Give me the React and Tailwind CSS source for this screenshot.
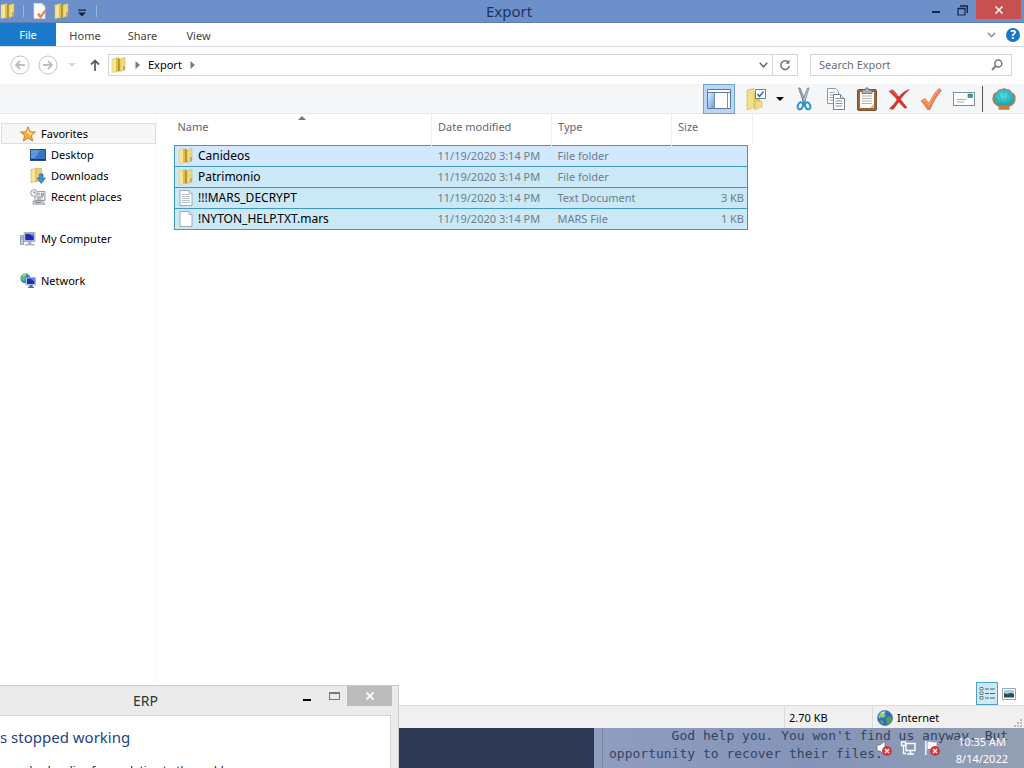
import { useState } from 'react';

const files = [
  { name: 'Canideos', date: '11/19/2020 3:14 PM', type: 'File folder', size: '', icon: 'folder' },
  { name: 'Patrimonio', date: '11/19/2020 3:14 PM', type: 'File folder', size: '', icon: 'folder' },
  { name: '!!!MARS_DECRYPT', date: '11/19/2020 3:14 PM', type: 'Text Document', size: '3 KB', icon: 'text' },
  { name: '!NYTON_HELP.TXT.mars', date: '11/19/2020 3:14 PM', type: 'MARS File', size: '1 KB', icon: 'blank' },
];

function FolderIcon({ className = 'w-4 h-4' }) {
  return (
    <svg viewBox="0 0 16 16" className={className} aria-hidden="true">
      <path d="M1 2l6-1.500v14l-6 1z" fill="#f6e694" stroke="#d8c060" strokeWidth=".5" />
      <path d="M5 1.200l2-.7v14l-2 .4z" fill="#dcc052" />
      <path d="M7 .5L9 2v12l-2 .5z" fill="#b3942f" />
      <path d="M9 2l5-1.500V12l-5 3z" fill="#efda7a" stroke="#cdae48" strokeWidth=".5" />
      <path d="M12 9h2v4l-2 1z" fill="#b7ab78" />
    </svg>
  );
}

function FileIcon({ lined }) {
  return (
    <svg viewBox="0 0 16 16" className="w-4 h-4" aria-hidden="true">
      <path d="M2 .5h9l3 3v12H2z" fill="#fff" stroke="#98a0a8" strokeWidth=".9" />
      <path d="M11 .5v3h3" fill="#e8ecef" stroke="#98a0a8" strokeWidth=".8" />
      {lined && <path d="M4 4.500h7M4 6.500h8M4 8.500h8M4 10.500h8M4 12.500h8" stroke="#a5aeb8" strokeWidth=".8" />}
    </svg>
  );
}

function FileCheckIcon() {
  return (
    <svg viewBox="0 0 16 16" className="w-4 h-4" aria-hidden="true">
      <path d="M2 .5h8l3 3v12H2z" fill="#fff" stroke="#d8dce6" strokeWidth=".7" />
      <path d="M10 .5v3h3" fill="#dde" />
      <path d="M6 10.500l2.500 3.500L13.500 7.500" fill="none" stroke="#e8845a" strokeWidth="2.400" />
    </svg>
  );
}

function StarIcon() {
  return (
    <svg viewBox="0 0 16 16" className="w-4 h-4" aria-hidden="true">
      <path d="M8 .7l2.100 5 5.400.4-4.100 3.500 1.300 5.400L8 12.100 3.300 15l1.300-5.400L.5 6.100l5.400-.4z" fill="#fba93a" stroke="#c97a3c" strokeWidth=".9" />
      <path d="M8 2.800l1.300 3.800 3.700.3-3 2.300-2-2.200-3.500-.6 2.100-.2z" fill="#ffe29a" />
    </svg>
  );
}

function DesktopIcon() {
  return (
    <svg viewBox="0 0 16 16" className="w-4 h-4" aria-hidden="true">
      <rect x=".5" y="2.500" width="15" height="11" fill="#3b74c6" stroke="#2a4d86" />
      <path d="M1 3h9L5 11H1z" fill="#5e98de" />
      <path d="M1 12h14v1H1z" fill="#1d3b6c" />
    </svg>
  );
}

function DownloadsIcon() {
  return (
    <svg viewBox="0 0 16 16" className="w-4 h-4" aria-hidden="true">
      <path d="M1 1.500L6 .5v13l-5 1z" fill="#f5e49a" stroke="#c9ab48" strokeWidth=".6" />
      <path d="M6 .5h5.500v12L6 14z" fill="#e8cf6a" stroke="#c9ab48" strokeWidth=".6" />
      <path d="M9.500 6h3.500v4h2.500L11.300 15.500 7 10h2.500z" fill="#3f8fd6" stroke="#2567a8" strokeWidth=".7" />
    </svg>
  );
}

function RecentIcon() {
  return (
    <svg viewBox="0 0 16 16" className="w-4 h-4" aria-hidden="true">
      <path d="M5 2.500h10v9H5z" fill="#e7eaec" stroke="#8e979e" strokeWidth=".9" />
      <path d="M3 12h9.500l2.500 3.200H3z" fill="#cfd5d9" stroke="#8e979e" strokeWidth=".8" />
      <path d="M7 5h3M11.500 4.500h2v2h-2zM7 8h6M7 10h4M5 13.500h6" fill="none" stroke="#7d878f" strokeWidth=".9" />
      <circle cx="4" cy="4" r="3.400" fill="#f4f6f7" stroke="#8e979e" strokeWidth=".9" />
      <path d="M4 2v2h2" fill="none" stroke="#6b757d" strokeWidth=".8" />
    </svg>
  );
}

function ComputerIcon() {
  return (
    <svg viewBox="0 0 16 16" className="w-4 h-4" aria-hidden="true">
      <path d="M.5 4.500h3v9h-3z" fill="#c3c9d0" stroke="#7c8791" strokeWidth=".7" />
      <path d="M1.200 6.500h1.600M1.200 8h1.600" stroke="#6d7780" strokeWidth=".6" />
      <path d="M4 1.500h11v9H4z" fill="#d7dce4" stroke="#8d97a5" strokeWidth=".7" />
      <path d="M5.200 2.700h8.600v6.600H5.200z" fill="#1f29b4" />
      <path d="M8.500 2.700h5.300v3z" fill="#6d7ff0" />
      <path d="M8 10.500h3.500V13H8zM5.500 12.700h8.500l1 1.800H4.500z" fill="#aab2bc" />
    </svg>
  );
}

function NetworkIcon() {
  return (
    <svg viewBox="0 0 16 16" className="w-4 h-4" aria-hidden="true">
      <circle cx="5.500" cy="5.500" r="5" fill="#2f86cf" />
      <path d="M2 2.500c2-2 4-1.500 5-1.500L5 4l1 2-3 2-2-2z" fill="#5fbf6a" />
      <path d="M2.500 2.800C4 1.500 5 1.500 6 1.600L4 3.500z" fill="#c4f0ce" />
      <path d="M6 4.500h9.500V12H6z" fill="#cfd8e4" stroke="#8492a5" strokeWidth=".6" />
      <path d="M7 5.500h7.500V11H7z" fill="#1c2cb8" />
      <path d="M10.500 5.500h4V9z" fill="#5a78f0" />
      <path d="M9.500 12h3v1.800h1.500V15H8v-1.200h1.500z" fill="#4b6da8" />
    </svg>
  );
}

function GlobeIcon() {
  return (
    <svg viewBox="0 0 16 16" className="w-4 h-4" aria-hidden="true">
      <circle cx="8" cy="8" r="7.500" fill="#2f6cc2" stroke="#5a7290" strokeWidth=".7" />
      <path d="M3 3.500C5 1.500 7 1 9 1.500L7.500 4 9 5.500 6 8 4 7 2 8.500 1.200 7z" fill="#8bcf7a" />
      <path d="M9 7.500l4-1.500 2 3-2 4-3 1.500-.5-3z" fill="#4da552" />
      <path d="M3 10l3 1 .5 3.500-2-1z" fill="#5fb35c" />
      <path d="M4 3.300c1-1 2.500-1.500 4-1.500L5.500 4z" fill="#d8f1f5" />
    </svg>
  );
}

function LayoutIcon() {
  return (
    <svg viewBox="0 0 24 22" className="w-6 h-[22px]" aria-hidden="true">
      <defs>
        <linearGradient id="pane" x2="1" y2="1">
          <stop stopColor="#e4f2ff" />
          <stop offset="1" stopColor="#5ea0e0" />
        </linearGradient>
      </defs>
      <path d="M.5 1.500h23v19H.5z" fill="#fff" stroke="#5b7797" />
      <path d="M1 4.500h22" stroke="#5b7797" />
      <path d="M1 5h6v15H1z" fill="url(#pane)" />
      <path d="M7.500 5v15.500M20.500 5v15.500" stroke="#7492b3" />
    </svg>
  );
}

function SelectFolderIcon() {
  return (
    <svg viewBox="0 0 22 24" className="w-[22px] h-6" aria-hidden="true">
      <path d="M2 3l7-1.500v19L2 23z" fill="#f2df86" stroke="#cfb350" strokeWidth=".6" />
      <path d="M9 6h6v13l-6 4z" fill="#e3c85c" />
      <path d="M10 14h7v6l-7 2.500z" fill="#f0dd88" stroke="#cdb559" strokeWidth=".6" />
      <path d="M10.500 2.500h10v9h-10z" fill="#fff" stroke="#6b8192" />
      <path d="M12.500 7l2 2.500L18.500 4.500" fill="none" stroke="#2d6d94" strokeWidth="1.500" />
    </svg>
  );
}

function ScissorsIcon() {
  return (
    <svg viewBox="0 0 16 24" className="w-4 h-6" aria-hidden="true">
      <path d="M2.500 1l1.500 0 5.500 13-2 1.500z" fill="#a6b4bf" stroke="#5d6c78" strokeWidth=".7" />
      <path d="M13 1l-1.500 0L6.500 14l2 1.500z" fill="#c7d1d8" stroke="#5d6c78" strokeWidth=".7" />
      <ellipse cx="4.300" cy="18.800" rx="2.500" ry="3.600" transform="rotate(24 4.300 18.800)" fill="none" stroke="#258fd0" strokeWidth="1.900" />
      <ellipse cx="11.700" cy="18.800" rx="2.500" ry="3.600" transform="rotate(-24 11.700 18.800)" fill="none" stroke="#258fd0" strokeWidth="1.900" />
      <path d="M8 13l2 3-2 1-2-1z" fill="#3296d2" />
    </svg>
  );
}

function CopyIcon() {
  return (
    <svg viewBox="0 0 20 24" className="w-5 h-6" aria-hidden="true">
      <path d="M1.500 1.500h8l3 3v12h-11z" fill="#fff" stroke="#8b98a3" />
      <path d="M3.500 5.500h5M3.500 8h7M3.500 10.500h7M3.500 13h5" stroke="#9ba8b2" />
      <path d="M7.500 7.500h7l4 4v11h-11z" fill="#fff" stroke="#75838f" />
      <path d="M14.500 7.500v4h4" fill="#dfe5ea" stroke="#75838f" />
      <path d="M9.500 11.500h4M9.500 14h7M9.500 16.500h7M9.500 19h7" stroke="#8296a6" />
    </svg>
  );
}

function ClipboardIcon() {
  return (
    <svg viewBox="0 0 22 24" className="w-[22px] h-6" aria-hidden="true">
      <rect x="1.500" y="2.500" width="19" height="21" rx="1.500" fill="#98653c" stroke="#7d5230" />
      <path d="M4 5h14v16H4z" fill="#fdfdfb" />
      <path d="M6 9h10M6 11.500h10M6 14h10M6 16.500h10" stroke="#b0b0ac" />
      <path d="M14 21l4-4v4z" fill="#c9bfae" />
      <path d="M6 3h3c0-3 4-3 4 0h3v3.500H6z" fill="#a8aeb4" stroke="#666d73" strokeWidth=".8" />
    </svg>
  );
}

function DeleteIcon() {
  return (
    <svg viewBox="0 0 22 22" className="w-[22px] h-[22px]" aria-hidden="true">
      <path d="M1 3.500C3 2 4 1.500 5.500 2.500 7.500 4.500 9 6.500 11 9c2.500-3.500 5.500-6 10.500-7.500C18 4.500 15 7.500 12.500 11.200c2 3 4.500 5.700 6.500 8.300l-2 1c-2.300-2-4.500-4.500-6.200-6.700C9 16.500 7 19 5 21.500l-3.500-1c3-2.500 5.500-5.500 7.500-8.800C6.700 8.500 4 5.500 1 3.500z" fill="#d6352c" stroke="#b52f29" strokeWidth=".5" />
      <path d="M2.500 3.500c1-.8 2-.8 2.700 0L9 8" fill="none" stroke="#ee7d70" strokeWidth=".8" />
    </svg>
  );
}

function ApplyIcon() {
  return (
    <svg viewBox="0 0 22 24" className="w-[22px] h-6" aria-hidden="true">
      <path d="M1 14l4-2.500 4 5C12 10 15 5 19 1.500l2.500 2C16.500 9 13 15 10 22.500H7.500C5.500 19 3.500 16.500 1 14z" fill="#ee8350" stroke="#c9683d" strokeWidth=".7" />
      <path d="M3 14l2-1 4 5.500C12 11 15 7 19 3" fill="none" stroke="#f9b287" />
    </svg>
  );
}

function MailIcon() {
  return (
    <svg viewBox="0 0 24 16" className="w-6 h-4" aria-hidden="true">
      <rect x="1.500" y="1.500" width="21" height="13" fill="#fdfdfd" stroke="#7f92a3" />
      <path d="M16 3h4.500v3.500H16z" fill="#3f9c93" stroke="#317d79" strokeWidth=".6" />
      <path d="M5 8.500h9M5 11h7" stroke="#9ab0c0" />
    </svg>
  );
}

function ShellIcon() {
  return (
    <svg viewBox="0 0 26 24" className="w-[26px] h-6" aria-hidden="true">
      <defs>
        <radialGradient id="shell" cx=".45" cy=".4" r=".65">
          <stop stopColor="#5fe0e4" />
          <stop offset=".6" stopColor="#2cb9c6" />
          <stop offset="1" stopColor="#4f8f86" />
        </radialGradient>
      </defs>
      <path d="M8 20C3 18 0 13 2 9c0-3 3-4 4-4 1-3 4-3 5-3 2-1.500 4 0 5 .3 3-.3 4 1.700 5 3.200 3 1 4 3.500 3.500 5.500.5 4-2 7.500-6.500 9l.5 2.500H8z" fill="#a5814f" />
      <path d="M8.500 19C5 17 2.500 13 3.500 9.500 4 7 5 6 6.500 6c1-2.500 3-3 4.500-3 2-1 3.500-.5 4.500.2 3 0 4 1.500 4.500 3 2.500.8 3.500 3 3.200 5 .3 3.500-2 6.500-5.700 7.800z" fill="url(#shell)" />
      <path d="M12.800 19V4M11 18.500L8 6M9.500 18L4.500 11M14.500 18.500L18 6M16 18l5.500-7" fill="none" stroke="#168995" strokeWidth=".6" opacity=".6" />
      <path d="M8 19c3-1.500 7-1.500 10 0l.5 3.500h-11z" fill="#c07c42" />
    </svg>
  );
}

function NavCircle({ label, flip }) {
  return (
    <button aria-label={label} className="w-5 h-5">
      <svg viewBox="0 0 20 20" className={flip ? 'w-5 h-5 rotate-180' : 'w-5 h-5'}>
        <circle cx="10" cy="10" r="9" fill="#fff" stroke="#c4c4c4" />
        <path d="M15 10H6M10 6l-4 4 4 4" fill="none" stroke="#bdbdbd" strokeWidth="1.800" />
      </svg>
    </button>
  );
}

function Caret({ className }) {
  return (
    <svg viewBox="0 0 8 8" className={className} aria-hidden="true">
      <path d="M0 2h8L4 6z" fill="currentColor" />
    </svg>
  );
}

function RightCaret() {
  return (
    <svg viewBox="0 0 5 8" className="w-[5px] h-2 text-[#7a7a7a]" aria-hidden="true">
      <path d="M.5 0L5 4 .5 8z" fill="currentColor" />
    </svg>
  );
}

function RedCross() {
  return (
    <g>
      <circle cx="11" cy="11" r="5" fill="#d8353b" />
      <path d="M9 9l4 4M13 9l-4 4" stroke="#fff" strokeWidth="1.400" />
    </g>
  );
}

function TitleBar() {
  return (
    <header className="relative flex items-center h-[23px] bg-[#6d8fca] border-b border-[#5d7db8]">
      <div className="flex items-center">
        <FolderIcon />
        <span className="w-px h-3 ml-[7px] bg-[#9fb5dd]"></span>
        <button aria-label="Properties" className="ml-2"><FileCheckIcon /></button>
        <button aria-label="New folder" className="ml-1.5"><FolderIcon /></button>
        <button aria-label="Customize toolbar" className="ml-2 pt-1 text-[#0f1f48]">
          <svg viewBox="0 0 8 8" className="w-2 h-2"><path d="M0 .5h8v1.200H0zM0 3.500h8l-4 4z" fill="currentColor" /></svg>
        </button>
        <span className="w-px h-3 ml-2.5 bg-[#9fb5dd]"></span>
      </div>
      <h1 className="absolute inset-x-0 text-center text-[15px] leading-6 text-[#1b3462] pointer-events-none pr-1.5">Export</h1>
      <div className="ml-auto flex self-start">
        <button aria-label="Minimize" className="w-7 h-5 flex items-center justify-center">
          <span className="w-2 h-0.5 mt-1 bg-[#14254a]"></span>
        </button>
        <button aria-label="Restore" className="w-6 h-5 flex items-center justify-center">
          <svg viewBox="0 0 11 11" className="w-[11px] h-[11px]">
            <path d="M1 3.500h7v6.500H1z" fill="none" stroke="#14254a" strokeWidth="1.200" />
            <path d="M1 3.500h7M3 1h7.300v7" fill="none" stroke="#14254a" strokeWidth="1.400" />
          </svg>
        </button>
        <button aria-label="Close" className="w-[45px] h-[19px] ml-0.5 mr-[3px] flex items-center justify-center bg-[#c75050]">
          <svg viewBox="0 0 8 8" className="w-2 h-2"><path d="M.5.5l7 7M7.500.5l-7 7" stroke="#fff" strokeWidth="1.500" /></svg>
        </button>
      </div>
    </header>
  );
}

function RibbonTabs() {
  return (
    <nav className="flex h-6 bg-white border-b border-[#d9dadb] text-[#444]">
      <button className="w-14 bg-[#1979ca] text-white">File</button>
      <button className="w-[58px] pt-0.5">Home</button>
      <button className="w-[57px] pt-0.5">Share</button>
      <button className="w-[55px] pt-0.5">View</button>
      <div className="ml-auto flex items-center gap-2.5 pr-1">
        <button aria-label="Expand ribbon">
          <svg viewBox="0 0 9 6" className="w-[9px] h-1.5"><path d="M.8.8l3.700 3.700L8.200.8" fill="none" stroke="#999" strokeWidth="1.700" /></svg>
        </button>
        <button aria-label="Help" className="w-3.5 h-3.5 rounded-full bg-[#1c75c8] text-white text-xs leading-3.5 font-bold">?</button>
      </div>
    </nav>
  );
}

function AddressBar() {
  const [search, setSearch] = useState('');

  return (
    <div className="flex items-center h-[37px] pl-2.5 pr-3 pb-0.5 bg-white">
      <NavCircle label="Back" />
      <div className="ml-2 flex"><NavCircle label="Forward" flip /></div>
      <button aria-label="Recent locations" className="ml-2.5 text-[#dadada]"><Caret className="w-2 h-2" /></button>
      <button aria-label="Up" className="ml-3.5">
        <svg viewBox="0 0 10 12" className="w-2.5 h-3"><path d="M5 12V1.500M1 5.500l4-4 4 4" fill="none" stroke="#5f5f5f" strokeWidth="1.800" /></svg>
      </button>
      <div className="ml-2 flex flex-1 h-[22px] border border-[#d5d5d5]">
        <div className="flex flex-1 items-center pl-0.5">
          <FolderIcon />
          <span className="ml-2"><RightCaret /></span>
          <button className="mx-2 text-black">Export</button>
          <RightCaret />
          <button aria-label="Previous locations" className="ml-auto mr-1">
            <svg viewBox="0 0 9 6" className="w-[9px] h-1.5"><path d="M.8.8l3.700 4L8.200.8" fill="none" stroke="#666" strokeWidth="1.500" /></svg>
          </button>
        </div>
        <button aria-label="Refresh" className="w-[25px] flex items-center justify-center border-l border-[#d5d5d5]">
          <svg viewBox="0 0 12 12" className="w-3 h-3">
            <path d="M9.500 3.500A4.300 4.300 0 1 0 10.300 7" fill="none" stroke="#777" strokeWidth="1.600" />
            <path d="M10.500.8v4H6.500z" fill="#777" />
          </svg>
        </button>
      </div>
      <label className="ml-3 flex items-center w-[202px] h-[22px] pl-2 pr-2 border border-[#d5d5d5]">
        <input
          type="text"
          aria-label="Search Export"
          placeholder="Search Export"
          value={search}
          onChange={(e) => setSearch(e.target.value)}
          className="flex-1 min-w-0 outline-none placeholder:text-[#6d6d6d]"
        />
        <svg viewBox="0 0 12 12" className="w-3 h-3" aria-hidden="true">
          <circle cx="7.300" cy="4.500" r="3.500" fill="none" stroke="#777" strokeWidth="1.500" />
          <path d="M4.800 7L1 10.800" stroke="#777" strokeWidth="1.900" />
        </svg>
      </label>
    </div>
  );
}

function Toolbar() {
  return (
    <div className="flex items-center justify-end h-[30px] pr-[7px] bg-[#f5f6f7] border-b border-[#e8e9ea]">
      <button aria-label="Navigation pane" className="w-8 h-[30px] flex items-center justify-center bg-[#bcd6f2] border border-[#6ea3d8]"><LayoutIcon /></button>
      <button aria-label="Select" className="ml-2.5"><SelectFolderIcon /></button>
      <button aria-label="Select options" className="ml-[9px] text-black"><Caret className="w-2 h-2" /></button>
      <button aria-label="Cut" className="ml-3"><ScissorsIcon /></button>
      <button aria-label="Copy" className="ml-3.5"><CopyIcon /></button>
      <button aria-label="Paste" className="ml-2.5"><ClipboardIcon /></button>
      <button aria-label="Delete" className="ml-2.5"><DeleteIcon /></button>
      <button aria-label="Apply" className="ml-2.5"><ApplyIcon /></button>
      <button aria-label="Mail" className="ml-2.5"><MailIcon /></button>
      <span className="w-px h-[26px] ml-1.5 mr-2 bg-[#555]"></span>
      <button aria-label="Shell"><ShellIcon /></button>
    </div>
  );
}

function SideItem({ icon, children, nested }) {
  return (
    <li>
      <a href="#" className={nested ? 'flex items-center h-[21px] pl-[30px] gap-[5px]' : 'flex items-center h-[21px] pl-5 gap-[5px]'}>
        {icon}
        {children}
      </a>
    </li>
  );
}

function Sidebar() {
  return (
    <aside className="w-[157px] shrink-0 pt-[9px] border-r border-[#f9fafa] text-black">
      <ul>
        <li>
          <a href="#" className="flex items-center h-[21px] ml-px pl-[18px] gap-[5px] bg-[#f7f7f7] border border-[#dedede]">
            <StarIcon />
            Favorites
          </a>
        </li>
        <SideItem nested icon={<DesktopIcon />}>Desktop</SideItem>
        <SideItem nested icon={<DownloadsIcon />}>Downloads</SideItem>
        <SideItem nested icon={<RecentIcon />}>Recent places</SideItem>
      </ul>
      <ul className="mt-[21px]">
        <SideItem icon={<ComputerIcon />}>My Computer</SideItem>
      </ul>
      <ul className="mt-[21px]">
        <SideItem icon={<NetworkIcon />}>Network</SideItem>
      </ul>
    </aside>
  );
}

function FileTable() {
  return (
    <table className="w-[578px] table-fixed border-collapse">
      <colgroup>
        <col className="w-[257px]" />
        <col className="w-[120px]" />
        <col className="w-[120px]" />
        <col className="w-[76px]" />
        <col className="w-[5px]" />
      </colgroup>
      <thead>
        <tr className="h-[31px] text-left align-top text-[#5f6771]">
          <th className="relative font-normal pt-1 pl-[3px]">
            Name
            <svg viewBox="0 0 8 4" className="absolute top-0.5 left-[123px] w-2 h-1" aria-hidden="true"><path d="M0 4l4-4 4 4z" fill="#777" /></svg>
          </th>
          <th className="font-normal pt-1 pl-1.5 border-l border-[#eceef0]">Date modified</th>
          <th className="font-normal pt-1 pl-1.5 border-l border-[#eceef0]">Type</th>
          <th colSpan={2} className="font-normal pt-1 pl-1.5 border-x border-[#eceef0]">Size</th>
        </tr>
      </thead>
      <tbody>
        {files.map((file, i) => (
          <tr key={file.name} className={i === 0 ? 'h-[21px] bg-[#d1e8ff] text-[#6d7d8a]' : 'h-[21px] bg-[#cbe8f6] text-[#6d7d8a]'}>
            <td className="p-0 pl-[3px] border-y border-l border-[#3f97c8] text-xs text-black">
              <span className="flex items-center gap-1 h-5">
                {file.icon === 'folder' ? <FolderIcon /> : <FileIcon lined={file.icon === 'text'} />}
                {file.name}
              </span>
            </td>
            <td className="p-0 pl-1.5 border-y border-[#3f97c8]">{file.date}</td>
            <td className="p-0 pl-1.5 border-y border-[#3f97c8]">{file.type}</td>
            <td className="p-0 pr-[3px] text-right border-y border-r border-[#3f97c8]">{file.size}</td>
          </tr>
        ))}
      </tbody>
    </table>
  );
}

function ViewSwitch() {
  return (
    <div className="flex items-center justify-end mt-auto pr-2 gap-1">
      <button aria-label="Details view" className="w-[22px] h-[23px] flex items-center justify-center bg-[#cde8f6] border border-[#4ba0cc]">
        <svg viewBox="0 0 16 13" className="w-4 h-[13px]">
          <path d="M1 .5h3v2.500H1zM1 5h3v2.500H1zM1 9.500h3V12H1z" fill="#fff" stroke="#5a6a76" strokeWidth=".9" />
          <path d="M6 2h4M11 2h5M6 6.500h4M11 6.500h5M6 11h4M11 11h5" stroke="#4f6270" />
        </svg>
      </button>
      <button aria-label="Large icons view">
        <svg viewBox="0 0 14 12" className="w-3.5 h-3">
          <path d="M.5.5h13v11H.5z" fill="#fff" stroke="#9aa4ab" />
          <path d="M2 2h10v4H2z" fill="#9fd0e8" />
          <path d="M2 5l3 1 4-1 3 1v3.500H2z" fill="#2c4a55" />
        </svg>
      </button>
    </div>
  );
}

function StatusBar() {
  return (
    <footer className="relative flex h-[23px] bg-[#f0f0f0] border-t border-[#dcdcdc] text-black">
      <div className="ml-auto w-[88px] pl-1 pt-0.5 flex items-center border-l border-[#dadada]">2.70 KB</div>
      <div className="w-[152px] pl-1 pt-0.5 flex items-center gap-1 border-l border-[#dadada]">
        <GlobeIcon />
        Internet
      </div>
      <svg viewBox="0 0 10 10" className="absolute right-0 bottom-0 w-2.5 h-2.5" aria-hidden="true">
        <path d="M6 1h2v2H6zM3 4h2v2H3zM6 4h2v2H6zM0 7h2v2H0zM3 7h2v2H3zM6 7h2v2H6z" fill="#bdbdbd" />
      </svg>
    </footer>
  );
}

function Taskbar() {
  return (
    <div className="relative h-10 overflow-hidden bg-[#2d3955] flex justify-end">
      <div className="w-[430px] pl-2 bg-linear-to-r from-[#8f9dbf] via-[#8494b8] to-[#93a0b3]">
        <pre className="h-10 pl-1.5 -mt-px border-l border-[#7585aa] font-['DejaVu_Sans_Mono','Liberation_Mono',monospace] text-[13px] leading-[18px] text-[#35435f]">
          {"        God help you. You won't find us anyway. But\nopportunity to recover their files."}
        </pre>
      </div>
      <div className="absolute right-0 bottom-0 h-10 pr-4 flex items-center text-white">
        <button aria-label="Volume">
          <svg viewBox="0 0 16 16" className="w-4 h-4">
            <path d="M1 5h3l5-4v14l-5-4H1z" fill="#fff" stroke="#5a6680" strokeWidth=".7" />
            <RedCross />
          </svg>
        </button>
        <button aria-label="Network status" className="ml-2">
          <svg viewBox="0 0 16 16" className="w-4 h-4">
            <path d="M6 3.500h9v7H6zM10.500 10.500v3M7 14h7" fill="none" stroke="#fff" strokeWidth="1.400" />
            <path d="M1.500 2h4v3.500h-4zM3.500 5.500v8H6" fill="none" stroke="#fff" strokeWidth="1.300" />
          </svg>
        </button>
        <button aria-label="Action center" className="ml-2">
          <svg viewBox="0 0 16 16" className="w-4 h-4">
            <path d="M1.800 1v14" stroke="#fff" strokeWidth="1.400" />
            <path d="M3.500 2c3-1 4 1.500 9 0v7c-4 1.500-6-1-9 0z" fill="#fff" />
            <RedCross />
          </svg>
        </button>
        <time className="ml-4 pt-1 text-center leading-[17px]">10:35 AM<br />8/14/2022</time>
      </div>
    </div>
  );
}

function ErpDialog() {
  return (
    <section className="absolute left-0 bottom-0 w-[399px] h-[83px] overflow-hidden bg-[#ebebeb] border-t border-r border-[#c9c9c9]">
      <header className="flex items-start h-[29px] pr-1.5">
        <h2 className="flex-1 pl-[133px] text-sm leading-[30px] text-[#333]">ERP</h2>
        <button aria-label="Minimize" className="w-7 h-5 flex items-center justify-center"><span className="w-2 h-0.5 mt-2 bg-black"></span></button>
        <button aria-label="Maximize" className="w-[26px] h-5 flex items-center justify-center"><span className="w-[11px] h-2 border border-t-2 border-[#777]"></span></button>
        <button aria-label="Close" className="w-[45px] h-5 flex items-center justify-center bg-[#bcbcbc]">
          <svg viewBox="0 0 8 8" className="w-2 h-2"><path d="M.5.5l7 7M7.500.5l-7 7" stroke="#fff" strokeWidth="1.700" /></svg>
        </button>
      </header>
      <div className="h-20 mr-[7px] pt-[9px] bg-white border-t border-r border-[#d5d5d5]">
        <p className="text-[15px] leading-6 text-[#1f3f85]">s stopped working</p>
        <p className="mt-3 pl-[3px] whitespace-nowrap text-black">can check online for a solution to the problem.</p>
      </div>
    </section>
  );
}

export default function App() {
  return (
    <div className="relative flex flex-col h-screen overflow-hidden bg-white text-[11px] leading-[18px] text-[#1a1a1a] font-['Noto_Sans','Open_Sans',sans-serif]">
      <TitleBar />
      <RibbonTabs />
      <AddressBar />
      <Toolbar />
      <main className="flex flex-1 min-h-0">
        <Sidebar />
        <div className="flex flex-col flex-1 pl-[17px]">
          <FileTable />
          <ViewSwitch />
        </div>
      </main>
      <StatusBar />
      <Taskbar />
      <ErpDialog />
    </div>
  );
}
